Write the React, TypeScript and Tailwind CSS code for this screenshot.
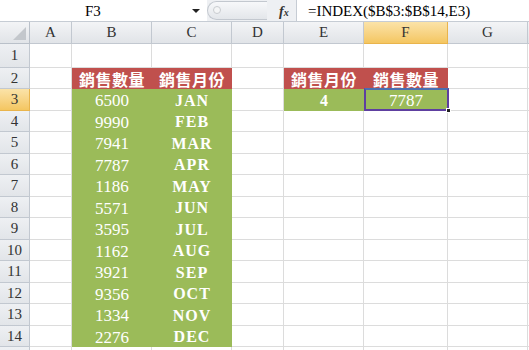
import React from "react";

const cols = [
  { k: "A", w: 42 },
  { k: "B", w: 80 },
  { k: "C", w: 80 },
  { k: "D", w: 52 },
  { k: "E", w: 80 },
  { k: "F", w: 84 },
  { k: "G", w: 80 },
];

const data: [string, string][] = [
  ["6500", "JAN"],
  ["9990", "FEB"],
  ["7941", "MAR"],
  ["7787", "APR"],
  ["1186", "MAY"],
  ["5571", "JUN"],
  ["3595", "JUL"],
  ["1162", "AUG"],
  ["3921", "SEP"],
  ["9356", "OCT"],
  ["1334", "NOV"],
  ["2276", "DEC"],
];

type Cell = { text?: string; fill?: "red" | "green"; kind?: "cjk" | "num" | "mon" | "bold" };

function getCell(row: number, col: string): Cell {
  if (row === 2) {
    if (col === "B") return { text: "銷售數量", fill: "red", kind: "cjk" };
    if (col === "C") return { text: "銷售月份", fill: "red", kind: "cjk" };
    if (col === "E") return { text: "銷售月份", fill: "red", kind: "cjk" };
    if (col === "F") return { text: "銷售數量", fill: "red", kind: "cjk" };
  }
  if (row >= 3 && row <= 14) {
    const d = data[row - 3];
    if (col === "B") return { text: d[0], fill: "green", kind: "num" };
    if (col === "C") return { text: d[1], fill: "green", kind: "mon" };
  }
  if (row === 3) {
    if (col === "E") return { text: "4", fill: "green", kind: "bold" };
    if (col === "F") return { text: "7787", fill: "green", kind: "num" };
  }
  return {};
}

const rowHeights: Record<number, string> = {
  1: "h-[23.5px]",
};

const serif = { fontFamily: '"Liberation Serif", "DejaVu Serif", serif' };
const cjk = { fontFamily: '"Noto Sans CJK TC", "Noto Sans CJK SC", sans-serif' };

export default function App() {
  const rows = Array.from({ length: 15 }, (_, i) => i + 1);
  return (
    <div className="relative w-[529px] h-[350px] overflow-hidden bg-white text-black" style={serif}>
      {/* Formula bar */}
      <div className="flex h-[22px] border-b border-[#c6ccd4] bg-white">
        <div className="relative w-[207px] h-full flex items-center">
          <span className="absolute left-[85px] top-[2px] text-[15px] leading-[18px]">F3</span>
          <span className="absolute left-[192px] top-[9px] w-0 h-0 border-l-[4px] border-r-[4px] border-t-[4px] border-l-transparent border-r-transparent border-t-[#222]" />
        </div>
        <div className="relative w-[90px] h-full bg-[#eef0f3] flex items-center">
          <div className="absolute left-0 top-[1px] h-[19px] w-[60px] rounded-l-full border border-r-0 border-[#c3c8cf] bg-gradient-to-b from-[#f7f8fa] to-[#e3e6ea]" />
          <div className="absolute left-[6px] top-[6px] w-[8px] h-[8px] rounded-full border border-[#c9ccd0] bg-[#f4f5f6]" />
          <span className="absolute left-[72px] top-[1px] text-[14px] italic font-bold text-[#333]">
            f<span className="text-[10px]">x</span>
          </span>
          <div className="absolute right-0 top-0 h-full border-r border-[#c6ccd4]" />
        </div>
        <div className="flex-1 flex items-center pl-[11px] text-[15px] leading-[18px]">
          =INDEX($B$3:$B$14,E3)
        </div>
      </div>

      {/* Column headers */}
      <div className="flex h-[22px] text-[15px] text-[#333]">
        <div className="relative w-[30px] h-full bg-gradient-to-b from-[#f3f4f6] to-[#e1e4e8] border-r border-b border-[#b9c0c9]">
          <svg className="absolute right-[3px] bottom-[3px]" width="13" height="13" viewBox="0 0 13 13">
            <polygon points="13,0 13,13 0,13" fill="#c3c7cc" />
          </svg>
        </div>
        {cols.map((c) => (
          <div
            key={c.k}
            className={
              "h-full flex items-center justify-center border-r border-b " +
              (c.k === "F"
                ? "bg-gradient-to-b from-[#fbe3a8] to-[#f4c660] border-[#e9b44c]"
                : "bg-gradient-to-b from-[#f3f4f6] to-[#e1e4e8] border-[#c2c8d0]")
            }
            style={{ width: c.w }}
          >
            {c.k}
          </div>
        ))}
        <div className="flex-1 h-full bg-gradient-to-b from-[#f3f4f6] to-[#e1e4e8] border-b border-[#c2c8d0]" />
      </div>

      {/* Rows */}
      {rows.map((r) => (
        <div key={r} className={"flex " + (rowHeights[r] ?? "h-[21.5px]")}>
          <div
            className={
              "w-[30px] h-full flex items-center justify-center text-[15px] border-r border-b " +
              (r === 3
                ? "bg-gradient-to-b from-[#fbe3a8] to-[#f4c660] border-[#e9b44c] text-[#333]"
                : "bg-gradient-to-b from-[#eef0f3] to-[#e2e5e9] border-[#c2c8d0] text-[#333]")
            }
          >
            {r <= 14 ? r : ""}
          </div>
          {cols.map((c) => {
            const cell = getCell(r, c.k);
            let cls = "h-full flex items-center justify-center ";
            if (cell.fill === "red") cls += "bg-[#c0504d] text-white";
            else if (cell.fill === "green") cls += "bg-[#9bbb59] text-white";
            else cls += "border-r border-b border-[#dcdcdc]";
            let textCls = "";
            let style: React.CSSProperties = {};
            if (cell.kind === "cjk") {
              textCls = "text-[16px] font-bold tracking-[0.5px]";
              style = cjk;
            } else if (cell.kind === "num") {
              textCls = "text-[17px]";
            } else if (cell.kind === "mon") {
              textCls = "text-[16px] font-bold tracking-[1px]";
            } else if (cell.kind === "bold") {
              textCls = "text-[16px] font-bold";
            }
            return (
              <div key={c.k} className={cls} style={{ width: c.w }}>
                {cell.text && (
                  <span className={textCls + " leading-none pt-[2px]"} style={style}>
                    {cell.text}
                  </span>
                )}
              </div>
            );
          })}
          <div className="flex-1 h-full border-b border-[#dcdcdc]" />
        </div>
      ))}

      {/* Selection F3 */}
      <div className="absolute left-[364px] top-[88px] w-[85px] h-[23px] border-2 border-[#5e3fa0] border-t-[#4a6fb0] pointer-events-none" />
      <div className="absolute left-[446px] top-[108px] w-[5px] h-[5px] bg-[#222] border border-white pointer-events-none" />
    </div>
  );
}
